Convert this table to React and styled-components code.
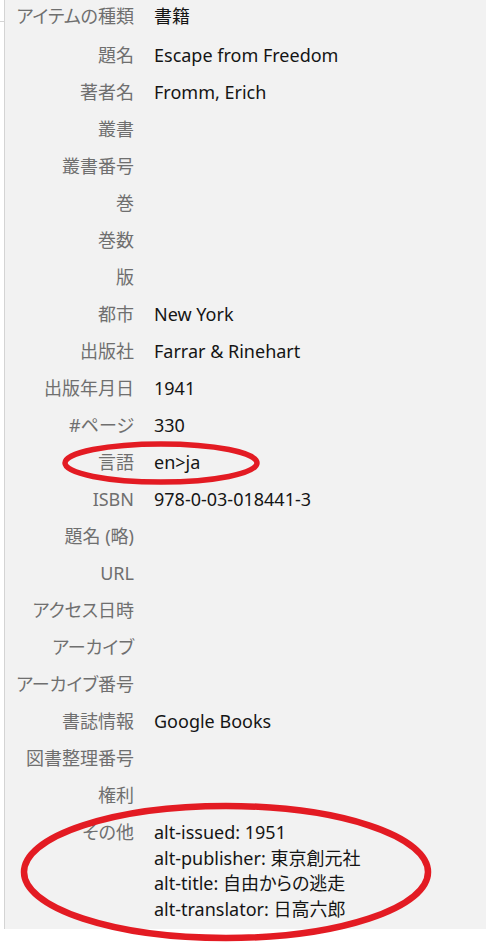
import styled, { createGlobalStyle } from 'styled-components'

const GlobalStyle = createGlobalStyle`
  html, body {
    margin: 0;
    padding: 0;
    background: #ffffff;
  }
  body {
    font-family: "Noto Sans", "Noto Sans CJK JP", sans-serif;
  }
`

const Page = styled.div`
  position: relative;
  width: 486px;
  height: 944px;
  overflow: hidden;
`

const Panel = styled.div`
  position: relative;
  margin-left: 4px;
  border-left: 1px solid #d4d4d4;
  background: #f2f2f2;
  padding-bottom: 1px;

  &::before {
    content: '';
    position: absolute;
    left: -5px;
    top: 22px;
    width: 4px;
    height: 1px;
    background: #d4d4d4;
  }
`

const Row = styled.div`
  display: grid;
  grid-template-columns: 129px 1fr;
  column-gap: 20px;
  padding: 5.65px 0;
  margin-top: ${props => (props.$first ? '-1.5px' : '0')};
  margin-bottom: ${props => (props.$first ? '2px' : '0')};
  font-size: 18px;
  line-height: 25.7px;
  font-feature-settings: "palt";
`

const Label = styled.div`
  text-align: right;
  color: #6f6f6f;
  white-space: nowrap;
`

const Value = styled.div`
  color: #151515;
  white-space: nowrap;
`

const Line = styled.div``

const Marks = styled.svg`
  position: absolute;
  left: 0;
  top: 0;
  pointer-events: none;
`

const fields = [
  ['アイテムの種類', '書籍'],
  ['題名', 'Escape from Freedom'],
  ['著者名', 'Fromm, Erich'],
  ['叢書', ''],
  ['叢書番号', ''],
  ['巻', ''],
  ['巻数', ''],
  ['版', ''],
  ['都市', 'New York'],
  ['出版社', 'Farrar & Rinehart'],
  ['出版年月日', '1941'],
  ['#ページ', '330'],
  ['言語', 'en>ja'],
  ['ISBN', '978-0-03-018441-3'],
  ['題名 (略)', ''],
  ['URL', ''],
  ['アクセス日時', ''],
  ['アーカイブ', ''],
  ['アーカイブ番号', ''],
  ['書誌情報', 'Google Books'],
  ['図書整理番号', ''],
  ['権利', ''],
]

const extra = [
  'alt-issued: 1951',
  'alt-publisher: 東京創元社',
  'alt-title: 自由からの逃走',
  'alt-translator: 日高六郎',
]

function App() {
  return (
    <>
      <GlobalStyle />
      <Page>
        <Panel>
          {fields.map(([label, value], i) => (
            <Row key={label} $first={i === 0}>
              <Label>{label}</Label>
              <Value>{value}</Value>
            </Row>
          ))}
          <Row>
            <Label>その他</Label>
            <Value>
              {extra.map(line => (
                <Line key={line}>{line}</Line>
              ))}
            </Value>
          </Row>
        </Panel>
        <Marks width="486" height="944" viewBox="0 0 486 944">
          <ellipse cx="161" cy="463" rx="96" ry="19" fill="none" stroke="#e31b23" strokeWidth="5.5" />
          <ellipse cx="226" cy="872" rx="202" ry="66" fill="none" stroke="#e31b23" strokeWidth="6.5" />
        </Marks>
      </Page>
    </>
  )
}

export default App
